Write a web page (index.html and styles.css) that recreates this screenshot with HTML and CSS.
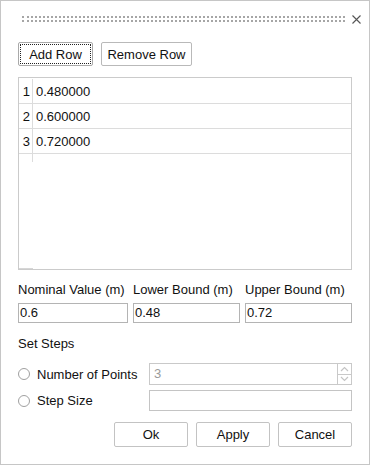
FILE: index.html
```html
<!DOCTYPE html>
<html>
<head>
<meta charset="utf-8">
<link rel="stylesheet" href="styles.css">
</head>
<body>
<div class="dialog">
  <div class="titlebar">
    <div class="grip"></div>
    <svg class="close" width="9" height="9" viewBox="0 0 9 9"><path d="M0.5 0.5 L8.5 8.5 M8.5 0.5 L0.5 8.5" stroke="#555" stroke-width="1.1" fill="none"/></svg>
  </div>

  <div class="toolrow">
    <button class="btn btn-add">Add Row</button>
    <button class="btn btn-remove">Remove Row</button>
  </div>

  <div class="table">
    <div class="row"><span class="num">1</span><span class="val">0.480000</span></div>
    <div class="row"><span class="num">2</span><span class="val">0.600000</span></div>
    <div class="row"><span class="num">3</span><span class="val">0.720000</span></div>
    <div class="filler"><span class="filler-head"></span></div>
    <div class="corner"></div>
  </div>

  <div class="bounds">
    <label class="blabel">Nominal Value (m)</label>
    <label class="blabel">Lower Bound (m)</label>
    <label class="blabel">Upper Bound (m)</label>
    <div class="field">0.6</div>
    <div class="field">0.48</div>
    <div class="field">0.72</div>
  </div>

  <div class="section">Set Steps</div>

  <div class="steps">
    <div class="radio-label"><span class="radio"></span>Number of Points</div>
    <div class="spin">
      <div class="spin-field">3</div>
      <div class="spin-buttons">
        <div class="spin-btn"><svg width="9" height="6" viewBox="0 0 9 6"><path d="M1 5 L4.5 1.5 L8 5" stroke="#c4c4c4" stroke-width="1.2" fill="none"/></svg></div>
        <div class="spin-btn"><svg width="9" height="6" viewBox="0 0 9 6"><path d="M1 1 L4.5 4.5 L8 1" stroke="#c4c4c4" stroke-width="1.2" fill="none"/></svg></div>
      </div>
    </div>
    <div class="radio-label row2"><span class="radio"></span>Step Size</div>
    <div class="field step-field row2"></div>
  </div>

  <div class="actions">
    <button class="btn act">Ok</button>
    <button class="btn act">Apply</button>
    <button class="btn act">Cancel</button>
  </div>
</div>
</body>
</html>
```

FILE: styles.css
```css
html, body {
  margin: 0;
  padding: 0;
  background: #ffffff;
}

.dialog {
  width: 370px;
  height: 465px;
  box-sizing: border-box;
  border: 1px solid #c6c6c6;
  padding: 0 17px 0 17px;
  font-family: "Liberation Sans", Arial, sans-serif;
  font-size: 13px;
  color: #111;
  background: #fff;
}

.titlebar {
  display: flex;
  align-items: center;
  padding-top: 14px;
  margin-left: 4px;
  margin-right: -9px;
  height: 8px;
}

.grip {
  flex: 1;
  height: 2px;
  border-top: 2px dotted #a6a6a6;
  border-bottom: 2px dotted #a6a6a6;
  margin-right: 7px;
}

.close {
  display: block;
  flex: none;
}

.toolrow {
  display: flex;
  gap: 8px;
  margin-top: 19px;
}

.btn {
  font-family: "Liberation Sans", Arial, sans-serif;
  font-size: 13px;
  color: #111;
  background: #fff;
  border: 1px solid #b9b9b9;
  border-radius: 2px;
  height: 24px;
  padding: 0;
  margin: 0;
}

.btn-add {
  width: 75px;
  border-color: #a9a9a9;
  outline: 1px dotted #222;
  outline-offset: -3px;
}

.btn-remove {
  width: 91px;
}

.table {
  margin-top: 11px;
  height: 193px;
  box-sizing: border-box;
  border: 1px solid #cbcbcb;
  padding-top: 1px;
  display: flex;
  flex-direction: column;
}

.row {
  display: flex;
  height: 25px;
  box-sizing: border-box;
  border-bottom: 1px solid #dcdcdc;
  align-items: center;
}

.num {
  width: 14px;
  box-sizing: border-box;
  padding-right: 2px;
  align-self: stretch;
  display: flex;
  align-items: center;
  justify-content: flex-end;
  border-right: 1px solid #dcdcdc;
}

.val {
  padding-left: 3px;
}

.filler {
  flex: 1;
  display: flex;
}

.filler-head {
  width: 14px;
  box-sizing: border-box;
  height: 8px;
  border-right: 1px solid #dcdcdc;
}

.corner {
  width: 14px;
  height: 1px;
  background: #d6d6d6;
}

.bounds {
  display: grid;
  grid-template-columns: 110px 107px 107px;
  column-gap: 5px;
  row-gap: 5px;
  margin-top: 12px;
}

.blabel {
  line-height: 16px;
  white-space: nowrap;
}

.field {
  height: 20px;
  box-sizing: border-box;
  border: 1px solid #b4b4b4;
  line-height: 18px;
  padding-left: 1px;
}

.section {
  margin-top: 13px;
  line-height: 16px;
}

.steps {
  display: grid;
  grid-template-columns: 131px 203px;
  margin-top: 11px;
  row-gap: 5px;
}

.radio-label {
  display: flex;
  align-items: center;
  gap: 7px;
}

.radio {
  width: 12px;
  height: 12px;
  box-sizing: border-box;
  border: 1px solid #a0a0a0;
  border-radius: 50%;
  flex: none;
}

.spin {
  display: flex;
  height: 22px;
}

.spin-field {
  flex: 1;
  box-sizing: border-box;
  border: 1px solid #c9c9c9;
  border-right: none;
  color: #9a9a9a;
  line-height: 20px;
  padding-left: 4px;
}

.spin-buttons {
  width: 15px;
  box-sizing: border-box;
  border: 1px solid #c9c9c9;
  display: flex;
  flex-direction: column;
}

.spin-btn {
  flex: 1;
  display: flex;
  align-items: center;
  justify-content: center;
}

.spin-btn + .spin-btn {
  border-top: 1px solid #c9c9c9;
}

.step-field {
  height: 21px;
  border-color: #c4c4c4;
}

.actions {
  display: flex;
  justify-content: flex-end;
  gap: 8px;
  margin-top: 11px;
}

.act {
  width: 74px;
  height: 25px;
  border-color: #c3c3c3;
}
```
